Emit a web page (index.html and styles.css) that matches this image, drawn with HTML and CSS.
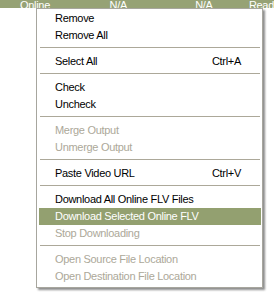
FILE: index.html
```html
<!DOCTYPE html>
<html lang="en">
<head>
    <meta charset="UTF-8">
    <title>Context Menu</title>
    <link rel="stylesheet" href="styles.css">
</head>
<body>
    <div class="list-row">
        <span class="cell status">Online</span>
        <span class="cell size">N/A</span>
        <span class="cell speed">N/A</span>
        <span class="cell state">Read</span>
    </div>
    <div class="menu">
        <div class="item">Remove</div>
        <div class="item">Remove All</div>
        <div class="sep"></div>
        <div class="item"><span>Select All</span><span class="key">Ctrl+A</span></div>
        <div class="sep"></div>
        <div class="item">Check</div>
        <div class="item">Uncheck</div>
        <div class="sep"></div>
        <div class="item disabled">Merge Output</div>
        <div class="item disabled">Unmerge Output</div>
        <div class="sep"></div>
        <div class="item"><span>Paste Video URL</span><span class="key">Ctrl+V</span></div>
        <div class="sep"></div>
        <div class="item">Download All Online FLV Files</div>
        <div class="item active">Download Selected Online FLV</div>
        <div class="item disabled">Stop Downloading</div>
        <div class="sep"></div>
        <div class="item disabled">Open Source File Location</div>
        <div class="item disabled">Open Destination File Location</div>
    </div>
</body>
</html>
```

FILE: styles.css
```css
body {
    margin: 0;
    background-color: #fff;
    font-family: Tahoma, 'Liberation Sans', sans-serif;
    font-size: 11px;
    letter-spacing: -0.3px;
    color: #000;
}
.list-row {
    height: 8px;
    overflow: hidden;
    background-color: #96a275;
    color: #fff;
    display: flex;
    line-height: 11px;
}
.cell {
    display: block;
    white-space: nowrap;
}
.status {
    margin-left: 20px;
    width: 90px;
}
.size {
    width: 86px;
}
.speed {
    width: 54px;
}
.menu {
    position: absolute; /* popup lies over the list */
    left: 36px;
    top: 8px;
    width: 227px;
    height: 280px;
    padding: 1px 1px 2px 2px;
    border: 1px solid #a7a69e;
    background-color: #fff;
    box-shadow: 2px 2px 2px rgba(0, 0, 0, 0.45);
    box-sizing: border-box;
}
.item {
    height: 17px;
    line-height: 17px;
    padding: 0 20px 0 16px;
    display: flex;
    justify-content: space-between;
    white-space: nowrap;
}
.item.disabled {
    color: #aca899;
}
.item.active {
    background-color: #93a070;
    color: #fff;
}
.sep {
    height: 1px;
    margin: 3px 1px 5px 1px;
    background-color: #aca899;
}
```
